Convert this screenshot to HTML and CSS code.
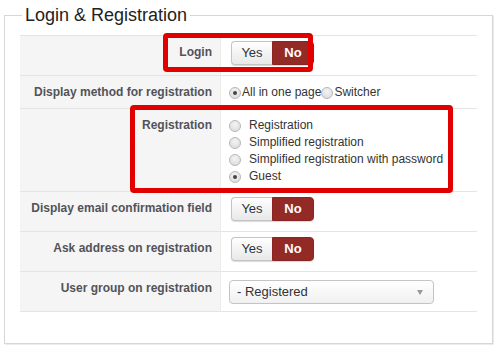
FILE: index.html
```html
<!DOCTYPE html>
<html lang="en">

<head>
    <meta charset="UTF-8">
    <meta name="viewport" content="width=device-width, initial-scale=1.0">
    <title>Login &amp; Registration</title>
    <link rel="stylesheet" href="styles.css">
</head>

<body>
    <fieldset class="options">
        <legend>Login &amp; Registration</legend>
        <div class="table-wrap">
            <table class="config">
                <tr class="row-login">
                    <th>Login</th>
                    <td>
                        <div class="toggle">
                            <span class="btn-yes">Yes</span><span class="btn-no">No</span>
                        </div>
                    </td>
                </tr>
                <tr class="row-method">
                    <th>Display method for registration</th>
                    <td>
                        <div class="radio-inline-group">
                            <label class="inline-radio"><span class="radio checked"></span>All in one page</label>
                            <label class="inline-radio"><span class="radio"></span>Switcher</label>
                        </div>
                    </td>
                </tr>
                <tr class="row-reg">
                    <th>Registration</th>
                    <td>
                        <ul class="radio-list">
                            <li><span class="radio"></span>Registration</li>
                            <li><span class="radio"></span>Simplified registration</li>
                            <li><span class="radio"></span>Simplified registration with password</li>
                            <li><span class="radio checked"></span>Guest</li>
                        </ul>
                    </td>
                </tr>
                <tr>
                    <th>Display email confirmation field</th>
                    <td>
                        <div class="toggle">
                            <span class="btn-yes">Yes</span><span class="btn-no">No</span>
                        </div>
                    </td>
                </tr>
                <tr>
                    <th>Ask address on registration</th>
                    <td>
                        <div class="toggle">
                            <span class="btn-yes">Yes</span><span class="btn-no">No</span>
                        </div>
                    </td>
                </tr>
                <tr class="row-group">
                    <th>User group on registration</th>
                    <td>
                        <div class="select">- Registered<span class="caret"></span></div>
                    </td>
                </tr>
            </table>

            <!-- annotation boxes -->
            <div class="mark mark-login"></div>
            <div class="mark mark-reg"></div>
        </div>
    </fieldset>
</body>

</html>
```

FILE: styles.css
```css
body {
    font-family: "Liberation Sans", Arial, sans-serif;
    margin: 0;
    padding: 0;
    background: #ffffff;
    color: #333;
}

.options {
    margin: 4px 7px 9px 4px;
    padding: 0 15px 31px 15px;
    border: 1px solid #d6d6d6;
    width: 457px;
    box-shadow: 1px 1px 0 #ececec;
}

.options legend {
    font-size: 18px;
    color: #222;
    padding: 0 3px;
    margin-left: 2px;
    line-height: 22px;
}

.table-wrap {
    position: relative;
    margin-top: 9px;
}

.config {
    width: 457px;
    border-collapse: collapse;
    font-size: 12px;
}

.config tr {
    border-top: 1px solid #e4e4e4;
    border-bottom: 1px solid #e4e4e4;
}

.config th {
    width: 184px;
    background: #f5f5f5;
    text-align: right;
    vertical-align: top;
    font-weight: bold;
    color: #52535a;
    padding: 8px 8px 8px 8px;
    line-height: 16px;
    white-space: nowrap;
}

.config td {
    vertical-align: top;
    padding: 5px 8px 10px 8px;
    border-left: 1px solid #ececec;
    color: #333;
}

.toggle {
    display: inline-flex;
    margin-left: 2px;
    border-radius: 4px;
    box-shadow: 0 1px 1px rgba(0, 0, 0, 0.15);
}

.toggle span {
    display: block;
    height: 22px;
    line-height: 22px;
    font-size: 13px;
    text-align: center;
}

.btn-yes {
    width: 40px;
    border: 1px solid #c4c4c4;
    border-right: none;
    border-radius: 4px 0 0 4px;
    background: linear-gradient(#ffffff, #e8e8e8);
    color: #333;
}

.btn-no {
    width: 40px;
    border: 1px solid #8a2420;
    border-radius: 0 4px 4px 0;
    background: #942a25;
    color: #fff;
    font-weight: bold;
}

.row-method td {
    padding-top: 8px;
    padding-bottom: 8px;
}

.radio-inline-group {
    display: flex;
    align-items: center;
    height: 16px;
}

.inline-radio {
    display: flex;
    align-items: center;
}

.radio {
    display: inline-block;
    flex: none;
    width: 10px;
    height: 10px;
    border: 1px solid #b9b9b9;
    border-radius: 50%;
    background: radial-gradient(circle at 50% 35%, #f4f4f4, #d8d8d8);
    position: relative;
    box-sizing: content-box;
}

.inline-radio .radio {
    margin: 2px 1px 0 0;
}

.radio.checked::after {
    content: "";
    position: absolute;
    left: 3px;
    top: 3px;
    width: 4px;
    height: 4px;
    border-radius: 50%;
    background: #444;
}

.row-reg td {
    padding-top: 7px;
    padding-bottom: 7px;
}

.radio-list {
    list-style: none;
    margin: 0;
    padding: 0;
}

.radio-list li {
    display: flex;
    align-items: center;
    height: 17px;
}

.radio-list .radio {
    margin: 3px 8px 0 0;
}

.row-group td {
    padding-top: 8px;
    padding-bottom: 7px;
}

.select {
    position: relative;
    width: 196px;
    height: 22px;
    line-height: 22px;
    padding-left: 7px;
    border: 1px solid #c4c4c4;
    border-radius: 4px;
    background: linear-gradient(#ffffff, #f0f0f0);
    font-size: 13px;
    color: #333;
}

.caret {
    position: absolute;
    right: 10px;
    top: 9px;
    border-left: 3px solid transparent;
    border-right: 3px solid transparent;
    border-top: 5px solid #999;
}

.mark {
    position: absolute;
    border: 5px solid #e00000;
    border-radius: 4px;
}

.mark-login {
    left: 143px;
    top: -2px;
    width: 140px;
    height: 29px;
}

.mark-reg {
    left: 110px;
    top: 70px;
    width: 313px;
    height: 78px;
}
```
